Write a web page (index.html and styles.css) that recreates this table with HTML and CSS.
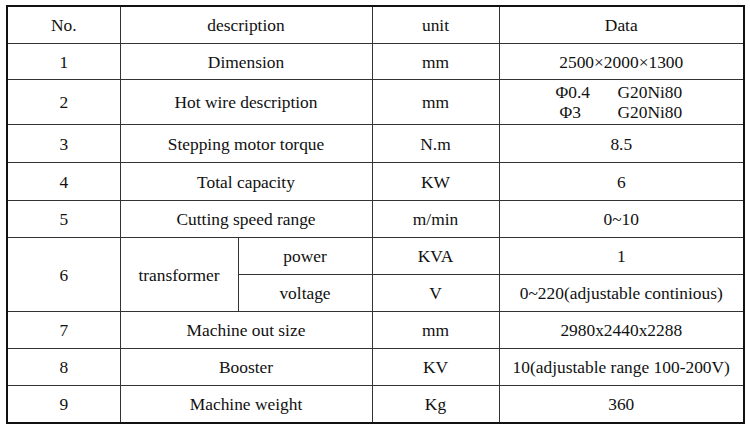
FILE: index.html
```html
<!DOCTYPE html>
<html>

<head>
    <meta charset="UTF-8">
    <link rel="stylesheet" href="styles.css">
</head>

<body>
    <table class="specs">
        <colgroup>
            <col class="c-no">
            <col class="c-desc">
            <col class="c-sub">
            <col class="c-unit">
            <col class="c-data">
        </colgroup>
        <tbody>
            <tr class="head">
                <td>No.</td>
                <td colspan="2">description</td>
                <td>unit</td>
                <td>Data</td>
            </tr>
            <tr class="short">
                <td>1</td>
                <td colspan="2">Dimension</td>
                <td>mm</td>
                <td>2500×2000×1300</td>
            </tr>
            <tr class="tall">
                <td>2</td>
                <td colspan="2">Hot wire description</td>
                <td>mm</td>
                <td>
                    <div class="wire"><span class="dia">Φ0.4</span><span>G20Ni80</span></div>
                    <div class="wire second"><span class="dia">Φ3</span><span>G20Ni80</span></div>
                </td>
            </tr>
            <tr class="wide">
                <td>3</td>
                <td colspan="2">Stepping motor torque</td>
                <td>N.m</td>
                <td>8.5</td>
            </tr>
            <tr class="wide">
                <td>4</td>
                <td colspan="2">Total capacity</td>
                <td>KW</td>
                <td>6</td>
            </tr>
            <tr>
                <td>5</td>
                <td colspan="2">Cutting speed range</td>
                <td>m/min</td>
                <td>0~10</td>
            </tr>
            <tr>
                <td rowspan="2">6</td>
                <td rowspan="2">transformer</td>
                <td>power</td>
                <td>KVA</td>
                <td>1</td>
            </tr>
            <tr>
                <td>voltage</td>
                <td>V</td>
                <td>0~220(adjustable continious)</td>
            </tr>
            <tr>
                <td>7</td>
                <td colspan="2">Machine out size</td>
                <td>mm</td>
                <td>2980x2440x2288</td>
            </tr>
            <tr>
                <td>8</td>
                <td colspan="2">Booster</td>
                <td>KV</td>
                <td>10(adjustable range 100-200V)</td>
            </tr>
            <tr>
                <td>9</td>
                <td colspan="2">Machine weight</td>
                <td>Kg</td>
                <td>360</td>
            </tr>
        </tbody>
    </table>
</body>

</html>
```

FILE: styles.css
```css
body {
    margin: 0;
    padding: 5px 0 0 6px;
    background-color: #fff;
}

table.specs {
    width: 739px;
    table-layout: fixed;
    border-collapse: collapse;
    border: 2px solid #111;
    font-family: "Liberation Serif", "Times New Roman", serif;
    font-size: 17.4px;
    color: #111;
}

col.c-no {
    width: 113px;
}

col.c-desc {
    width: 118px;
}

col.c-sub {
    width: 134px;
}

col.c-unit {
    width: 127px;
}

col.c-data {
    width: 245px;
}

table.specs td {
    padding: 0;
    height: 36px;
    text-align: center;
    vertical-align: middle;
    border: 1px solid #333;
    line-height: 20px;
}

table.specs tr.head td {
    height: 36px;
}

table.specs tr.short td {
    height: 35px;
}

table.specs tr.tall td {
    height: 44px;
}

table.specs tr.wide td {
    height: 37px;
}

.wire {
    display: flex;
    padding-left: 56px;
    text-align: left;
}

.wire .dia {
    width: 62px;
}

.wire.second {
    padding-left: 60px;
}

.wire.second .dia {
    width: 58px;
}
```
